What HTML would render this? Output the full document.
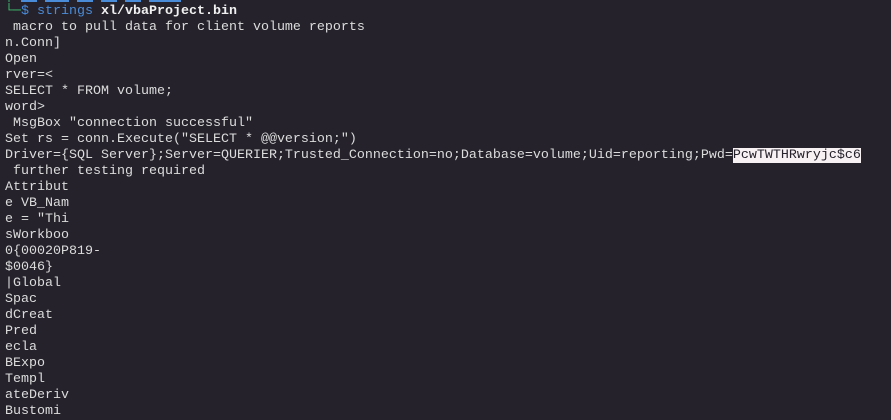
<!DOCTYPE html>
<html><head><style>
html,body{margin:0;padding:0;width:891px;height:417px;overflow:hidden;background:#25222b;}
pre{margin:0;position:absolute;left:5px;top:4px;font-family:"Liberation Mono",monospace;font-size:13.33px;line-height:16px;color:#dcdcdc;}
.g{color:#3fbf6f}.b{color:#4a8cd8}.w{color:#f0f0f0;font-weight:bold}
.h{background:#f8f1f4;color:#25222b}
.top{position:absolute;left:5px;top:-12px;height:16px;font-family:"Liberation Mono",monospace;font-size:13.33px;line-height:16px;color:#3fbf6f;}
</style></head><body>
<div class="top"><span class="g">│</span> <span class="b">   ██ ███ ██  ██  ██ ████</span></div>
<pre><span class="g">└─</span><span class="b">$</span> <span class="b">strings</span> <span class="w">xl/vbaProject.bin</span>
 macro to pull data for client volume reports
n.Conn]
Open
rver=&lt;
SELECT * FROM volume;
word&gt;
 MsgBox "connection successful"
Set rs = conn.Execute("SELECT * @@version;")
Driver={SQL Server};Server=QUERIER;Trusted_Connection=no;Database=volume;Uid=reporting;Pwd=<span class="h">PcwTWTHRwryjc$c6</span>
 further testing required
Attribut
e VB_Nam
e = "Thi
sWorkboo
0{00020P819-
$0046}
|Global
Spac
dCreat
Pred
ecla
BExpo
Templ
ateDeriv
Bustomi</pre>
</body></html>
